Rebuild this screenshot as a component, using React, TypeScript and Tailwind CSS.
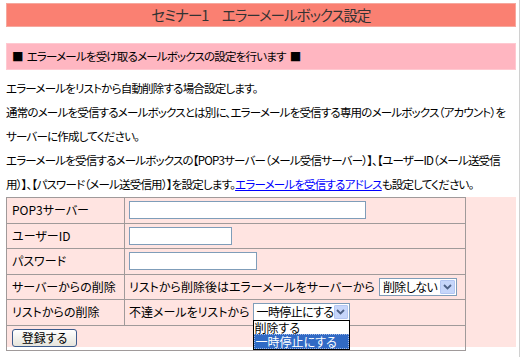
const jp = "font-['Noto_Sans_CJK_JP',sans-serif]";

const Chevron = () => (
  <svg width="9" height="6" viewBox="0 0 9 6" className="block">
    <path d="M1 1 L4.5 4.5 L8 1" stroke="#4d6185" strokeWidth="1.8" fill="none" />
  </svg>
);

const FakeSelect = ({ value, width }: { value: string; width: string }) => (
  <div
    className={`flex items-center h-[18px] ${width} border border-[#7f9db9] bg-white pl-[3px] pr-[1px]`}
  >
    <span className="flex-1 text-[12px] leading-none tracking-[-0.6px] text-black whitespace-nowrap">{value}</span>
    <span className="flex items-center justify-center w-[15px] h-[14px] bg-[#c6d6fa] border border-[#b3c6f2] rounded-[1px]">
      <Chevron />
    </span>
  </div>
);

const rows: { label: string; input: string }[] = [
  { label: "POP3サーバー", input: "w-[237px]" },
  { label: "ユーザーID", input: "w-[103px]" },
  { label: "パスワード", input: "w-[128px]" },
];

const cell = "h-[25.5px] border border-[#a09a9a]";

export default function App() {
  return (
    <div className={`w-[520px] h-[357px] overflow-hidden bg-white border-r border-[#d0d0d0] ${jp} text-black`}>
      <div className="pt-[3px] pl-[6px] w-[516px]">
        <div className="h-[24px] bg-[#fa8072] border border-[#f6a89e] text-center text-[14.5px] leading-[22px] tracking-[-1px] text-[#333] [font-feature-settings:'palt']">
          セミナー1　エラーメールボックス設定
        </div>

        <div className="mt-[16px] h-[27px] bg-[#ffb6c1] border border-[#ffc9d1] pl-[5px] text-[11.5px] leading-[25px] tracking-[-0.8px] [font-feature-settings:'palt']">
          <span className="mr-[4px]">■</span>エラーメールを受け取るメールボックスの設定を行います<span className="ml-[4px]">■</span>
        </div>

        <div className="pt-[6px] text-[11.5px] leading-[24px] tracking-[-0.8px] whitespace-nowrap [font-feature-settings:'palt']">
          <p>エラーメールをリストから自動削除する場合設定します。</p>
          <p>通常のメールを受信するメールボックスとは別に、エラーメールを受信する専用のメールボックス（アカウント）を</p>
          <p>サーバーに作成してください。</p>
          <p>エラーメールを受信するメールボックスの【POP3サーバー（メール受信サーバー）】、【ユーザーID（メール送受信</p>
          <p>
            用）】、【パスワード（メール送受信用）】を設定します。
            <a href="#" className="text-[#0000ff] underline">エラーメールを受信するアドレス</a>
            も設定してください。
          </p>
        </div>

        <div className="mt-[1px] h-[150px] bg-[#ffe4e1]">
          <table className="w-[460px] border-collapse text-[12px] [font-feature-settings:'palt']">
            <tbody>
              {rows.map((r) => (
                <tr key={r.label}>
                  <td className={`${cell} w-[118px] pl-[5px] whitespace-nowrap`}>{r.label}</td>
                  <td className={`${cell} pl-[4px]`}>
                    <div className={`h-[18px] ${r.input} border border-[#7f9db9] bg-white`} />
                  </td>
                </tr>
              ))}
              <tr>
                <td className={`${cell} pl-[5px] whitespace-nowrap`}>サーバーからの削除</td>
                <td className={`${cell} pl-[4px]`}>
                  <div className="flex items-center gap-[4px] whitespace-nowrap">
                    <span>リストから削除後はエラーメールをサーバーから</span>
                    <FakeSelect value="削除しない" width="w-[78px]" />
                  </div>
                </td>
              </tr>
              <tr>
                <td className={`${cell} pl-[5px] whitespace-nowrap`}>リストからの削除</td>
                <td className={`${cell} pl-[4px]`}>
                  <div className="flex items-center gap-[3px] whitespace-nowrap">
                    <span>不達メールをリストから</span>
                    <div className="relative">
                      <FakeSelect value="一時停止にする" width="w-[97px]" />
                      <div className="absolute left-0 top-[17px] w-[97px] border border-black bg-white text-[12px] leading-[13px] z-10">
                        <div className="pl-[1px]">削除する</div>
                        <div className="pl-[1px] bg-[#316ac5] text-white border border-dotted border-[#9fb7e6]">一時停止にする</div>
                      </div>
                    </div>
                  </div>
                </td>
              </tr>
              <tr>
                <td colSpan={2} className={`${cell} pl-[5px]`}>
                  <button className="h-[18px] w-[65px] rounded-[3px] border border-[#3c5a8c] bg-gradient-to-b from-white to-[#e6e4dc] text-[12px] leading-none text-black">
                    登録する
                  </button>
                </td>
              </tr>
            </tbody>
          </table>
        </div>
      </div>
    </div>
  );
}
